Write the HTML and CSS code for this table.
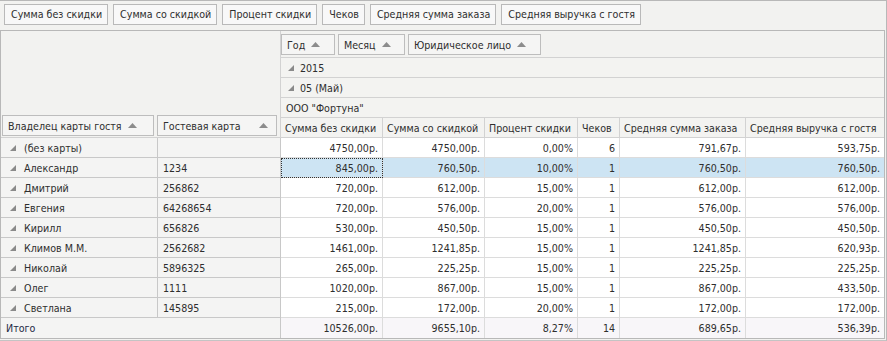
FILE: index.html
```html
<!DOCTYPE html>
<html lang="ru">
<head>
<meta charset="utf-8">
<link rel="stylesheet" href="styles.css">
</head>
<body>
<div class="app">
  <div class="toolbar">
    <span class="btn">Сумма без скидки</span>
    <span class="btn">Сумма со скидкой</span>
    <span class="btn">Процент скидки</span>
    <span class="btn">Чеков</span>
    <span class="btn">Средняя сумма заказа</span>
    <span class="btn">Средняя выручка с гостя</span>
  </div>
  <div class="pivot">
    <div class="corner">
      <span class="field f-owner">Владелец карты гостя <svg class="sort" width="9" height="5" viewBox="0 0 9 5"><polygon points="0,5 4.5,0 9,5"/></svg></span>
      <span class="field f-card">Гостевая карта <svg class="sort" width="9" height="5" viewBox="0 0 9 5"><polygon points="0,5 4.5,0 9,5"/></svg></span>
    </div>
    <div class="colfields">
      <span class="field f-year">Год <svg class="sort" width="9" height="5" viewBox="0 0 9 5"><polygon points="0,5 4.5,0 9,5"/></svg></span>
      <span class="field f-month">Месяц <svg class="sort" width="9" height="5" viewBox="0 0 9 5"><polygon points="0,5 4.5,0 9,5"/></svg></span>
      <span class="field f-org">Юридическое лицо <svg class="sort" width="9" height="5" viewBox="0 0 9 5"><polygon points="0,5 4.5,0 9,5"/></svg></span>
    </div>
    <div class="colgroup"><svg class="tri" width="6" height="6" viewBox="0 0 6 6"><polygon points="6,0 6,6 0,6"/></svg>2015</div>
    <div class="colgroup"><svg class="tri" width="6" height="6" viewBox="0 0 6 6"><polygon points="6,0 6,6 0,6"/></svg>05 (Май)</div>
    <div class="colgroup plain">ООО "Фортуна"</div>
    <div class="colhead">Сумма без скидки</div>
    <div class="colhead">Сумма со скидкой</div>
    <div class="colhead">Процент скидки</div>
    <div class="colhead">Чеков</div>
    <div class="colhead">Средняя сумма заказа</div>
    <div class="colhead last">Средняя выручка с гостя</div>

    <div class="rh"><svg class="tri" width="6" height="6" viewBox="0 0 6 6"><polygon points="6,0 6,6 0,6"/></svg>(без карты)</div><div class="rh2"></div>
    <div class="c">4750,00р.</div><div class="c">4750,00р.</div><div class="c">0,00%</div><div class="c">6</div><div class="c">791,67р.</div><div class="c last">593,75р.</div>

    <div class="rh"><svg class="tri" width="6" height="6" viewBox="0 0 6 6"><polygon points="6,0 6,6 0,6"/></svg>Александр</div><div class="rh2">1234</div>
    <div class="c sel focus">845,00р.</div><div class="c sel">760,50р.</div><div class="c sel">10,00%</div><div class="c sel">1</div><div class="c sel">760,50р.</div><div class="c sel last">760,50р.</div>

    <div class="rh"><svg class="tri" width="6" height="6" viewBox="0 0 6 6"><polygon points="6,0 6,6 0,6"/></svg>Дмитрий</div><div class="rh2">256862</div>
    <div class="c">720,00р.</div><div class="c">612,00р.</div><div class="c">15,00%</div><div class="c">1</div><div class="c">612,00р.</div><div class="c last">612,00р.</div>

    <div class="rh"><svg class="tri" width="6" height="6" viewBox="0 0 6 6"><polygon points="6,0 6,6 0,6"/></svg>Евгения</div><div class="rh2">64268654</div>
    <div class="c">720,00р.</div><div class="c">576,00р.</div><div class="c">20,00%</div><div class="c">1</div><div class="c">576,00р.</div><div class="c last">576,00р.</div>

    <div class="rh"><svg class="tri" width="6" height="6" viewBox="0 0 6 6"><polygon points="6,0 6,6 0,6"/></svg>Кирилл</div><div class="rh2">656826</div>
    <div class="c">530,00р.</div><div class="c">450,50р.</div><div class="c">15,00%</div><div class="c">1</div><div class="c">450,50р.</div><div class="c last">450,50р.</div>

    <div class="rh"><svg class="tri" width="6" height="6" viewBox="0 0 6 6"><polygon points="6,0 6,6 0,6"/></svg>Климов М.М.</div><div class="rh2">2562682</div>
    <div class="c">1461,00р.</div><div class="c">1241,85р.</div><div class="c">15,00%</div><div class="c">1</div><div class="c">1241,85р.</div><div class="c last">620,93р.</div>

    <div class="rh"><svg class="tri" width="6" height="6" viewBox="0 0 6 6"><polygon points="6,0 6,6 0,6"/></svg>Николай</div><div class="rh2">5896325</div>
    <div class="c">265,00р.</div><div class="c">225,25р.</div><div class="c">15,00%</div><div class="c">1</div><div class="c">225,25р.</div><div class="c last">225,25р.</div>

    <div class="rh"><svg class="tri" width="6" height="6" viewBox="0 0 6 6"><polygon points="6,0 6,6 0,6"/></svg>Олег</div><div class="rh2">1111</div>
    <div class="c">1020,00р.</div><div class="c">867,00р.</div><div class="c">15,00%</div><div class="c">1</div><div class="c">867,00р.</div><div class="c last">433,50р.</div>

    <div class="rh"><svg class="tri" width="6" height="6" viewBox="0 0 6 6"><polygon points="6,0 6,6 0,6"/></svg>Светлана</div><div class="rh2">145895</div>
    <div class="c">215,00р.</div><div class="c">172,00р.</div><div class="c">20,00%</div><div class="c">1</div><div class="c">172,00р.</div><div class="c last">172,00р.</div>

    <div class="total-label">Итого</div>
    <div class="c t">10526,00р.</div><div class="c t">9655,10р.</div><div class="c t">8,27%</div><div class="c t">14</div><div class="c t">689,65р.</div><div class="c t last">536,39р.</div>
  </div>
</div>
</body>
</html>
```
FILE: styles.css
```css
* { box-sizing: border-box; }
html, body { margin: 0; padding: 0; }
body {
  width: 887px;
  height: 341px;
  background: #f2f2f0;
  font-family: "DejaVu Sans Condensed", "DejaVu Sans", sans-serif;
  font-size: 10.6px;
  color: #2e2e2e;
  overflow: hidden;
}
.app {
  width: 887px;
  height: 341px;
  border-top: 1px solid #b8b8b8;
  border-right: 1px solid #b8b8b8;
  border-bottom: 1px solid #c4c4c4;
}
.toolbar {
  display: flex;
  gap: 5px;
  padding: 3px 4px 0 4px;
  height: 29px;
}
.btn {
  height: 21px;
  line-height: 19px;
  padding: 0 5px 0 6px;
  border: 1px solid #b9b9b9;
  background: #f8f8f8;
  white-space: nowrap;
}
.pivot {
  width: 885px;
  border: 1px solid #b8b8b8;
  background: #ffffff;
  display: grid;
  grid-template-columns: 157px 123px 102px 102px 93px 42px 126px 138px;
  grid-template-rows: 27px repeat(14, 20px);
}
.corner {
  grid-column: 1 / 3;
  grid-row: 1 / 6;
  background: #f2f2f0;
  border-right: 1px solid #d2d2d2;
  border-bottom: 1px solid #d2d2d2;
  display: flex;
  align-items: flex-end;
  gap: 3px;
  padding: 0 0 1px 1px;
}
.field {
  display: flex;
  align-items: center;
  height: 21px;
  border: 1px solid #bdbdbd;
  background: #f5f5f4;
  padding: 0 5px;
  white-space: nowrap;
}
.sort { fill: #8c8c8c; margin-left: 6px; }
.f-owner { width: 152px; }
.f-card { width: 120px; }
.f-card .sort { margin-left: 18px; }
.f-year { width: 54px; }
.f-month { width: 67px; }
.f-org { width: 133px; }
.colfields {
  grid-column: 3 / 9;
  background: #f2f2f0;
  border-bottom: 1px solid #d2d2d2;
  display: flex;
  align-items: flex-start;
  gap: 3px;
  padding: 3px 0 0 0;
}
.colgroup {
  grid-column: 3 / 9;
  background: #f3f3f1;
  border-bottom: 1px solid #d2d2d2;
  display: flex;
  align-items: center;
  padding-left: 7px;
}
.colgroup.plain { padding-left: 5px; }
.tri { fill: #8a8a8a; margin-right: 6px; flex: none; }
.colhead {
  background: #f3f3f1;
  border-right: 1px solid #d2d2d2;
  border-bottom: 1px solid #d2d2d2;
  display: flex;
  align-items: center;
  padding-left: 4px;
  white-space: nowrap;
  overflow: hidden;
}
.last { border-right: none; }
.rh, .rh2, .total-label {
  background: #f4f4f3;
  border-right: 1px solid #c8c8c8;
  border-bottom: 1px solid #c8c8c8;
  display: flex;
  align-items: center;
  white-space: nowrap;
}
.rh { padding-left: 9px; }
.rh .tri { margin-right: 8px; }
.rh2 { padding-left: 5px; }
.total-label {
  grid-column: 1 / 3;
  padding-left: 5px;
  border-bottom: none;
  color: #1f2a44;
}
.c {
  background: #ffffff;
  border-right: 1px solid #dcdcdc;
  border-bottom: 1px solid #dcdcdc;
  display: flex;
  align-items: center;
  justify-content: flex-end;
  padding-right: 4px;
  white-space: nowrap;
}
.c.last { border-right: none; }
.c.sel { background: #cde4f3; }
.c.focus { outline: 1px dotted #333; outline-offset: -1px; }
.c.t { background: #f8f6f9; border-bottom: none; }
```
